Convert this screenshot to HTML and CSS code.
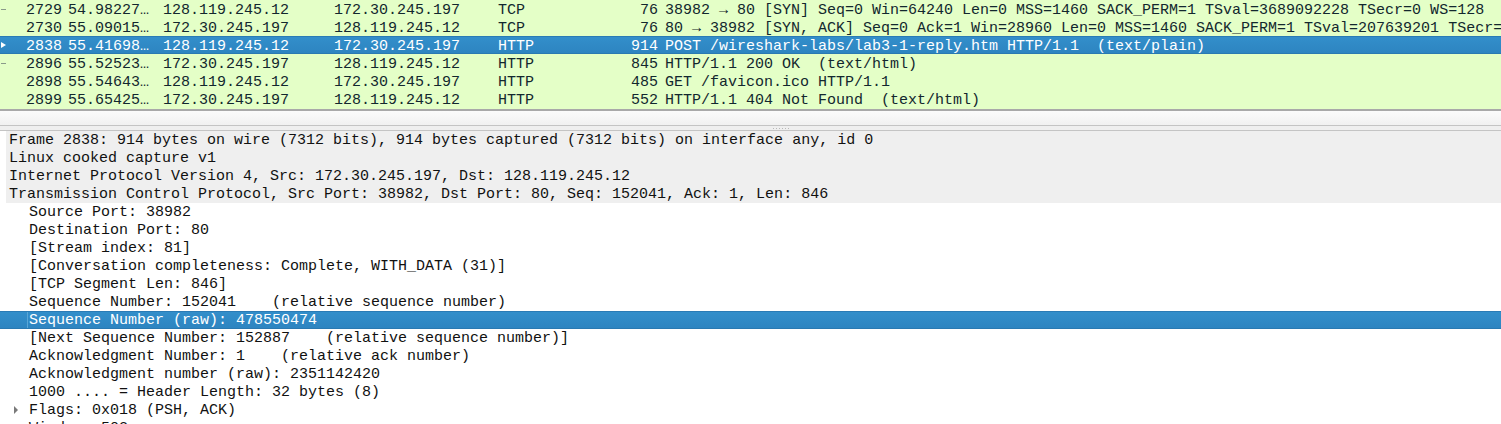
FILE: index.html
```html
<!DOCTYPE html>
<html>
<head>
<meta charset="utf-8">
<link rel="stylesheet" href="styles.css">
</head>
<body>
<div class="list">
  <div class="prow"><span class="c mk"><span class="dash"></span></span><span class="c no">2729</span><span class="c tm">54.98227…</span><span class="c src">128.119.245.12</span><span class="c dst">172.30.245.197</span><span class="c pr">TCP</span><span class="c len">76</span><span class="c info">38982 → 80 [SYN] Seq=0 Win=64240 Len=0 MSS=1460 SACK_PERM=1 TSval=3689092228 TSecr=0 WS=128</span></div>
  <div class="prow"><span class="c mk"></span><span class="c no">2730</span><span class="c tm">55.09015…</span><span class="c src">172.30.245.197</span><span class="c dst">128.119.245.12</span><span class="c pr">TCP</span><span class="c len">76</span><span class="c info">80 → 38982 [SYN, ACK] Seq=0 Ack=1 Win=28960 Len=0 MSS=1460 SACK_PERM=1 TSval=207639201 TSecr=3689092228 WS=512</span></div>
  <div class="prow sel"><span class="c mk"><span class="tri"></span></span><span class="c no">2838</span><span class="c tm">55.41698…</span><span class="c src">128.119.245.12</span><span class="c dst">172.30.245.197</span><span class="c pr">HTTP</span><span class="c len">914</span><span class="c info">POST /wireshark-labs/lab3-1-reply.htm HTTP/1.1  (text/plain)</span></div>
  <div class="prow"><span class="c mk"><span class="dash"></span></span><span class="c no">2896</span><span class="c tm">55.52523…</span><span class="c src">172.30.245.197</span><span class="c dst">128.119.245.12</span><span class="c pr">HTTP</span><span class="c len">845</span><span class="c info">HTTP/1.1 200 OK  (text/html)</span></div>
  <div class="prow"><span class="c mk"></span><span class="c no">2898</span><span class="c tm">55.54643…</span><span class="c src">128.119.245.12</span><span class="c dst">172.30.245.197</span><span class="c pr">HTTP</span><span class="c len">485</span><span class="c info">GET /favicon.ico HTTP/1.1</span></div>
  <div class="prow"><span class="c mk"></span><span class="c no">2899</span><span class="c tm">55.65425…</span><span class="c src">172.30.245.197</span><span class="c dst">128.119.245.12</span><span class="c pr">HTTP</span><span class="c len">552</span><span class="c info">HTTP/1.1 404 Not Found  (text/html)</span></div>
  <div class="tail"></div>
</div>
<div class="splitter"></div>
<div class="grip"><span class="dots"></span></div>
<div class="details">
  <div class="drow top">Frame 2838: 914 bytes on wire (7312 bits), 914 bytes captured (7312 bits) on interface any, id 0</div>
  <div class="drow top">Linux cooked capture v1</div>
  <div class="drow top">Internet Protocol Version 4, Src: 172.30.245.197, Dst: 128.119.245.12</div>
  <div class="drow top">Transmission Control Protocol, Src Port: 38982, Dst Port: 80, Seq: 152041, Ack: 1, Len: 846</div>
  <div class="drow child">Source Port: 38982</div>
  <div class="drow child">Destination Port: 80</div>
  <div class="drow child">[Stream index: 81]</div>
  <div class="drow child">[Conversation completeness: Complete, WITH_DATA (31)]</div>
  <div class="drow child">[TCP Segment Len: 846]</div>
  <div class="drow child">Sequence Number: 152041    (relative sequence number)</div>
  <div class="drow child dsel"><span class="focus"></span>Sequence Number (raw): 478550474</div>
  <div class="drow child">[Next Sequence Number: 152887    (relative sequence number)]</div>
  <div class="drow child">Acknowledgment Number: 1    (relative ack number)</div>
  <div class="drow child">Acknowledgment number (raw): 2351142420</div>
  <div class="drow child">1000 .... = Header Length: 32 bytes (8)</div>
  <div class="drow child"><span class="arrow"></span>Flags: 0x018 (PSH, ACK)</div>
  <div class="drow child">Window: 502</div>
</div>
</body>
</html>
```
FILE: styles.css
```css
html, body {
  margin: 0;
  padding: 0;
  background: #ffffff;
  overflow: hidden;
  height: 424px;
}
body {
  font-family: "Liberation Mono", "DejaVu Sans Mono", monospace;
  font-size: 15px;
  color: #12272e;
}
.list {
  background: #e4ffc7;
  border-bottom: 2px solid #a9a9a9;
}
.prow {
  display: flex;
  height: 18px;
  line-height: 22px;
  white-space: pre;
  overflow-x: clip;
  overflow-y: visible;
}
.prow.sel {
  background: linear-gradient(#338fcb, #2d84c0);
  color: #ffffff;
  box-shadow: inset 0 1px 0 #2a7bb5, inset 0 -1px 0 #2a79b1;
}
.c { flex: none; overflow-x: clip; overflow-y: visible; }
.mk { width: 10px; position: relative; }
.dash {
  position: absolute;
  left: 1px;
  top: 9px;
  width: 5px;
  height: 1px;
  background: #8a9a8a;
}
.tri {
  position: absolute;
  left: 1px;
  top: 6px;
  width: 0;
  height: 0;
  border-left: 5px solid #ffffff;
  border-top: 3px solid transparent;
  border-bottom: 3px solid transparent;
}
.no { width: 52px; text-align: right; }
.tm { width: 95px; padding-left: 6px; }
.src { width: 171px; }
.dst { width: 164px; }
.pr { width: 100px; }
.len { width: 60px; text-align: right; }
.info { flex: 1; padding-left: 7px; min-width: 0; }
.tail { height: 1px; }
.splitter {
  height: 14px;
  background: linear-gradient(#fbfbfb, #f1f1f1);
  border-bottom: 1px solid #c4c4c4;
}
.grip {
  height: 4px;
  background: #efefef;
  border-bottom: 1px solid #c4c4c4;
  display: flex;
  justify-content: center;
  align-items: center;
  padding-left: 60px;
}
.dots {
  width: 16px;
  height: 1px;
  background: repeating-linear-gradient(90deg, #b8b8b8 0 1px, transparent 1px 3px);
}
.details {
  color: #111111;
}
.drow {
  height: 18px;
  line-height: 20px;
  white-space: pre;
  position: relative;
  overflow-x: clip;
  overflow-y: visible;
}
.drow.top {
  margin-left: 6px;
  padding-left: 3px;
  background: #efefef;
}
.drow.child { padding-left: 29px; }
.drow.dsel {
  background: linear-gradient(#338fcb, #2d84c0);
  box-shadow: inset 0 1px 0 #2a7bb5, inset 0 -1px 0 #2a79b1;
  color: #ffffff;
}
.focus {
  position: absolute;
  left: 27px;
  top: 1px;
  width: 1px;
  height: 16px;
  background: #5aa6d6;
}
.arrow {
  position: absolute;
  left: 14px;
  top: 5px;
  width: 0;
  height: 0;
  border-left: 4px solid #7a7a7a;
  border-top: 4px solid transparent;
  border-bottom: 4px solid transparent;
}
```
